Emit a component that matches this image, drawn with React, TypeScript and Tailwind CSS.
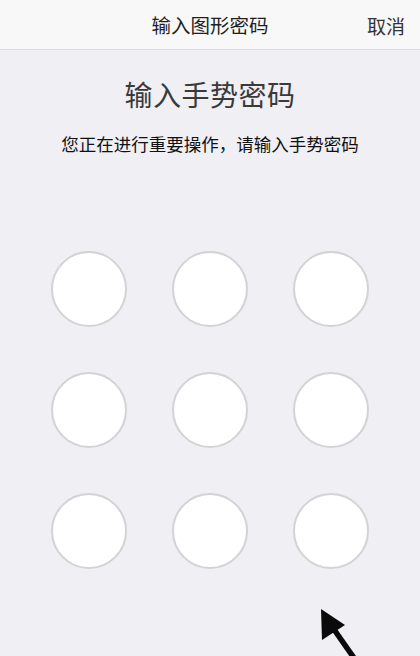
import React from "react";

export default function App() {
  const font = { fontFamily: '"Noto Sans CJK SC", "Noto Sans", sans-serif' };
  return (
    <div className="relative w-[420px] h-[656px] overflow-hidden bg-[#efeff4]" style={font}>
      <div className="relative h-[50px] bg-[#f8f8f9] border-b border-[#dcdce0] flex items-center justify-center">
        <span className="text-[19.5px] text-[#1f1f1f] leading-none">输入图形密码</span>
        <span className="absolute right-[15px] top-1/2 -translate-y-1/2 text-[19px] text-[#333333] leading-none">取消</span>
      </div>
      <div className="flex flex-col items-center">
        <div className="mt-[24px] text-[28px] leading-[40px] text-[#3a3a3a] tracking-[0.5px]">输入手势密码</div>
        <div className="mt-[18px] text-[17.5px] leading-[24px] text-[#111111]">您正在进行重要操作，请输入手势密码</div>
        <div className="mt-[95px] grid grid-cols-[76px_76px_76px] gap-x-[45px] gap-y-[45px]">
          {Array.from({ length: 9 }).map((_, i) => (
            <div key={i} className="w-[76px] h-[76px] rounded-full bg-white border-2 border-[#d3d3d6]" />
          ))}
        </div>
      </div>
      <svg className="absolute left-[310px] top-[600px]" width="60" height="56" viewBox="0 0 60 56">
        <line x1="16" y1="18" x2="44" y2="58" stroke="#0a0a0a" strokeWidth="5.5" />
        <polygon points="11,9 12,40 35,25" fill="#0a0a0a" />
      </svg>
    </div>
  );
}
